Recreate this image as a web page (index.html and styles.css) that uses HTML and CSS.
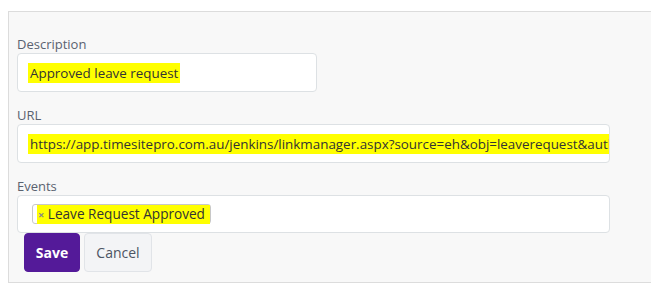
FILE: index.html
```html
<!DOCTYPE html>
<html>
<head>
<meta charset="utf-8">
<link rel="stylesheet" href="styles.css">
</head>
<body>
<div class="panel">
  <div class="field">
    <label class="label">Description</label>
    <div class="input input-short"><span class="hl">Approved leave request</span></div>
  </div>
  <div class="field">
    <label class="label">URL</label>
    <div class="input input-long"><span class="hl hl-url">https://app.timesitepro.com.au/jenkins/linkmanager.aspx?source=eh&amp;obj=leaverequest&amp;authorization=1</span></div>
  </div>
  <div class="field field-last">
    <label class="label">Events</label>
    <div class="input input-long input-tags"><span class="tag"><span class="hl hl-tag"><span class="tag-x">×</span> Leave Request Approved</span></span></div>
  </div>
  <div class="actions">
    <button class="btn btn-primary">Save</button>
    <button class="btn btn-default">Cancel</button>
  </div>
</div>
</body>
</html>
```
FILE: styles.css
```css
html, body {
  margin: 0;
  padding: 0;
  background: #ffffff;
}
body {
  padding: 11px 0 0 8px;
  font-family: "Open Sans", "Liberation Sans", sans-serif;
  overflow: hidden;
}
.panel {
  width: 700px;
  background: #f8f8f8;
  border: 1px solid #dcdcdc;
  padding: 23px 0 10px 8px;
  box-sizing: border-box;
}
.field {
  margin-bottom: 14px;
}
.field-last {
  margin-bottom: 0;
}
.label {
  display: block;
  height: 18px;
  font-size: 13px;
  line-height: 18px;
  color: #5a6270;
}
.input {
  box-sizing: border-box;
  height: 39px;
  background: #ffffff;
  border: 1px solid #dde1e4;
  border-radius: 4px;
  padding: 0 10px;
  display: flex;
  align-items: center;
  overflow: hidden;
  white-space: nowrap;
  font-size: 13.4px;
  color: #333333;
}
.input-short {
  width: 300px;
}
.input-long {
  width: 593px;
}
.hl {
  background: #ffff00;
  padding: 2px 2px;
  line-height: 16px;
}
.hl-url {
  padding-left: 2px;
}
.input-tags {
  padding-left: 14px;
  height: 38px;
  font-size: 13.6px;
}
.tag {
  display: inline-flex;
  align-items: center;
  box-sizing: border-box;
  height: 20px;
  border: 1px solid #c8c8c8;
  border-radius: 3px;
  padding: 0 0 0 4px;
}
.hl-tag {
  padding: 1px 5px 1px 1px;
}
.tag-x {
  color: #888888;
  font-size: 11px;
  font-weight: bold;
}
.actions {
  display: flex;
  gap: 4px;
  padding-left: 7px;
}
.btn {
  box-sizing: border-box;
  height: 39px;
  border-radius: 4px;
  font-family: "Open Sans", "Liberation Sans", sans-serif;
  font-size: 14px;
  cursor: pointer;
}
.btn-primary {
  width: 56px;
  background: #541a99;
  border: 1px solid #541a99;
  color: #ffffff;
  font-weight: bold;
}
.btn-default {
  width: 68px;
  background: #f3f4f6;
  border: 1px solid #e1e4e8;
  color: #4d5563;
}
```
